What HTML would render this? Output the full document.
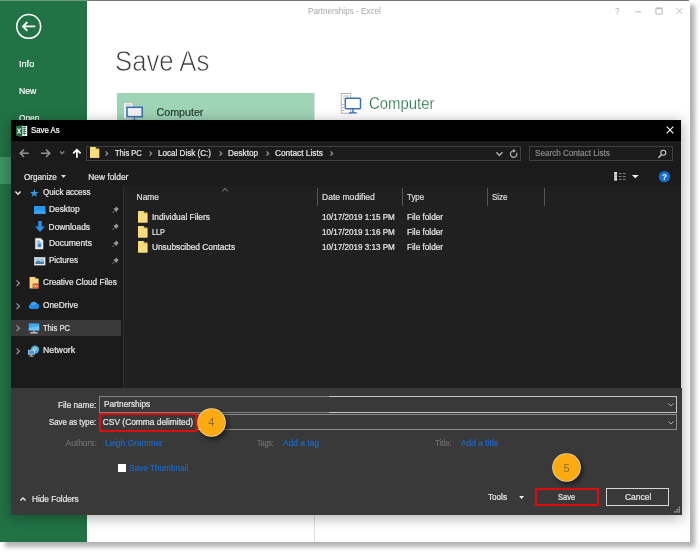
<!DOCTYPE html>
<html><head><meta charset="utf-8"><title>Save As</title>
<style>
html,body{margin:0;padding:0;}
body{width:700px;height:553px;background:#fff;overflow:hidden;position:relative;font-family:"Liberation Sans",sans-serif;}
#shot{position:absolute;left:0;top:0;width:689.5px;height:542.2px;background:#fff;box-shadow:4.5px 4.5px 4.5px rgba(0,0,0,.3);overflow:hidden;}
.t{position:absolute;white-space:nowrap;display:block;}
.a{position:absolute;display:block;}
#lay{position:absolute;left:0;top:0;width:700px;height:553px;will-change:transform;}
#side{left:0;top:0;width:87.4px;height:543px;background:#217346;}
#sel{left:0;top:157.3px;width:87.4px;height:27.1px;background:#3f9666;}
#dlg{left:10.6px;top:119.8px;width:670.9px;height:394.7px;background:#1b1b1b;box-shadow:0 3px 13px 1px rgba(0,0,0,.32);}
svg{position:absolute;overflow:visible;}
</style></head>
<body>
<div id="shot"><div id="lay">
<div class="a" id="side"></div><div class="a" id="sel"></div>
<div class="a" style="left:0;top:0;width:87.4px;height:.9px;background:#6f9b80"></div>
<div class="a" style="left:87.4px;top:0;width:602.1px;height:.9px;background:#767676"></div>
<svg style="left:14px;top:12px" width="30" height="30" viewBox="14 12 30 30"><circle cx="28.7" cy="26.4" r="11.9" fill="none" stroke="#fff" stroke-width="1.6"/><path d="M35.3 26.4H23.6M27.4 22L23 26.4L27.4 30.8" fill="none" stroke="#fff" stroke-width="1.9"/></svg>
<span class="t " style="left:18.60px;top:56.20px;font-size:9.80px;line-height:16px;height:16px;color:#fff;transform-origin:0 50%;transform:scaleX(0.930);-webkit-text-stroke:.2px;">Info</span>
<span class="t " style="left:18.60px;top:83.30px;font-size:9.80px;line-height:16px;height:16px;color:#fff;transform-origin:0 50%;transform:scaleX(0.888);-webkit-text-stroke:.2px;">New</span>
<span class="t " style="left:18.60px;top:110.20px;font-size:9.80px;line-height:16px;height:16px;color:#fff;transform-origin:0 50%;transform:scaleX(0.851);-webkit-text-stroke:.2px;">Open</span>
<span class="t " style="left:307.50px;top:4.40px;font-size:8.70px;line-height:14px;height:14px;color:#a6a6a6;transform-origin:0 50%;transform:scaleX(0.938);">Partnerships - Excel</span>
<svg style="left:610px;top:4px" width="80" height="16" viewBox="610 4 80 16"><g fill="none" stroke="#bcbcbc" stroke-width="1"><path d="M635.2 11.8H641.4"/><path d="M655.9 8.2H662.2V14H655.9Z"/><path d="M655.9 8.4H662.2" stroke-width="1.6"/><path d="M676.2 8L682.4 14.1M682.4 8L676.2 14.1"/></g></svg>
<span class="t " style="left:615.20px;top:4.10px;font-size:8.80px;line-height:14px;height:14px;color:#adadad;transform-origin:0 50%;transform:scaleX(0.899);">?</span>
<span class="t" style="left:115px;top:41.44px;font-size:29.6px;line-height:40px;color:#3a3a3a;-webkit-text-stroke:.75px #fff;transform-origin:0 0;transform:scaleX(0.868)">Save As</span>
<div class="a" style="left:117.1px;top:93.1px;width:197.1px;height:42px;background:#9fd5b7"></div>
<div class="a" style="left:313.8px;top:93px;width:1px;height:450px;background:#e1e1e1"></div>
<svg style="left:120px;top:100px" width="26" height="22" viewBox="120 100 26 22"><rect x="123.5" y="102.7" width="9.4" height="16" fill="#f6f8f7" stroke="#b4b8b6" stroke-width=".8"/><path d="M125 105H131.4M125 107.5H131.4" stroke="#a8a8a8" stroke-width=".7"/><rect x="127" y="107.3" width="15.2" height="9.4" fill="#f2f3f5" stroke="#3f72b2" stroke-width="1.6"/><path d="M134.6 117.4V120M131 120.3H138.2" stroke="#3f72b2" stroke-width="1.2"/></svg>
<span class="t " style="left:156.60px;top:103.50px;font-size:10.66px;line-height:17px;height:17px;color:#263c30;-webkit-text-stroke:.2px;">Computer</span>
<svg style="left:338px;top:90px" width="28" height="28" viewBox="338 90 28 28"><rect x="341.2" y="93.6" width="9.6" height="19.6" fill="#fff" stroke="#a4a4a4" stroke-width=".8"/><path d="M343 96H349M343 98.3H349" stroke="#a0a0a0" stroke-width=".7"/><path d="M342.4 104.5H343.8M342.4 107.5H343.8M342.4 110.5H343.8" stroke="#8a8a8a" stroke-width=".8"/><rect x="345.3" y="98.3" width="15.2" height="10.4" rx="1" fill="#fff" stroke="#3a74b8" stroke-width="1.5"/><path d="M353 109V112.4M349.2 112.8H356.8" stroke="#2e6db4" stroke-width="1.3"/></svg>
<span class="t " style="left:368.80px;top:90.70px;font-size:15.60px;line-height:25px;height:25px;color:#1d7044;transform-origin:0 50%;transform:scaleX(0.956);-webkit-text-stroke:.25px #fff;">Computer</span>
<div class="a" id="dlg">
<div class="a" style="left:-10.6px;top:-119.8px;width:700px;height:553px;">
<div class="a" style="left:10.6px;top:119.8px;width:670.9px;height:21.4px;background:#000"></div>
<div class="a" style="left:122.6px;top:186px;width:558.9px;height:202px;background:#202020;border-left:1px solid #2e2e2e;box-sizing:border-box"></div>
<div class="a" style="left:10.5px;top:388px;width:671px;height:126.5px;background:#393939"></div>
<svg style="left:16px;top:124.5px" width="12" height="12" viewBox="0 0 12 12"><rect x="4.6" y="1" width="6.6" height="10" fill="#fff"/><path d="M6.6 2.4H10.2M6.6 4.4H10.2M6.6 6.4H10.2M6.6 8.4H10.2" stroke="#217346" stroke-width="1"/><path d="M8.3 1.5V10.5" stroke="#217346" stroke-width=".7"/><path d="M0 1.2L6.3 0V12L0 10.8Z" fill="#1e6e42"/><path d="M1.6 3.5L4.6 8.5M4.6 3.5L1.6 8.5" stroke="#fff" stroke-width="1.1"/></svg>
<span class="t " style="left:31.20px;top:124.10px;font-size:8.40px;line-height:13px;height:13px;color:#fff;transform-origin:0 50%;transform:scaleX(0.928);-webkit-text-stroke:.22px;">Save As</span>
<svg style="left:666px;top:126px" width="8" height="8" viewBox="0 0 8 8"><path d="M.7 .7L7.3 7.3M7.3 .7L.7 7.3" stroke="#fff" stroke-width="1.1"/></svg>
<svg style="left:15px;top:145px" width="70" height="16" viewBox="15 145 70 16"><g fill="none"><path d="M28.8 153.3H20.4M24 149.6L20.2 153.3L24 157" stroke="#959595" stroke-width="1.5"/><path d="M41 153.3H49.6M46 149.6L49.8 153.3L46 157" stroke="#959595" stroke-width="1.5"/><path d="M59.9 151.4L62.1 153.6L64.3 151.4" stroke="#777" stroke-width="1.5"/><path d="M76.9 157.8V150M73.2 153.4L76.9 149.7L80.6 153.4" stroke="#fff" stroke-width="1.8"/></g></svg>
<div class="a" style="left:86.2px;top:145.7px;width:434.6px;height:14.9px;border:.9px solid #404040;box-sizing:border-box"></div>
<svg style="left:89.8px;top:147.3px" width="9.2" height="10.8" viewBox="0 0 9 10.4" preserveAspectRatio="none"><path d="M0 0H5.4V1.4H9V10.4H0Z" fill="#e9c85f"/><path d="M0 0H5.6V2.2H9V10.4H0Z" fill="#f7db7d"/><path d="M5.6 0V2.2H9" fill="none" stroke="#d9b64c" stroke-width=".5"/></svg>
<svg style="left:105px;top:151.10000000000002px" width="3.4" height="5" viewBox="0 0 3.4 5"><path d="M.5 .4L2.7 2.5L.5 4.6" fill="none" stroke="#9a9a9a" stroke-width="1.2"/></svg>
<span class="t " style="left:114.80px;top:146.80px;font-size:8.40px;line-height:13px;height:13px;color:#e6e6e6;transform-origin:0 50%;transform:scaleX(0.900);-webkit-text-stroke:.22px;">This PC</span>
<svg style="left:149.4px;top:151.10000000000002px" width="3.4" height="5" viewBox="0 0 3.4 5"><path d="M.5 .4L2.7 2.5L.5 4.6" fill="none" stroke="#9a9a9a" stroke-width="1.2"/></svg>
<span class="t " style="left:158.20px;top:146.80px;font-size:8.40px;line-height:13px;height:13px;color:#e6e6e6;transform-origin:0 50%;transform:scaleX(0.966);-webkit-text-stroke:.22px;">Local Disk (C:)</span>
<svg style="left:218.8px;top:151.10000000000002px" width="3.4" height="5" viewBox="0 0 3.4 5"><path d="M.5 .4L2.7 2.5L.5 4.6" fill="none" stroke="#9a9a9a" stroke-width="1.2"/></svg>
<span class="t " style="left:228.10px;top:146.80px;font-size:8.40px;line-height:13px;height:13px;color:#e6e6e6;transform-origin:0 50%;transform:scaleX(0.977);-webkit-text-stroke:.22px;">Desktop</span>
<svg style="left:266.3px;top:151.10000000000002px" width="3.4" height="5" viewBox="0 0 3.4 5"><path d="M.5 .4L2.7 2.5L.5 4.6" fill="none" stroke="#9a9a9a" stroke-width="1.2"/></svg>
<span class="t " style="left:275.00px;top:146.80px;font-size:8.40px;line-height:13px;height:13px;color:#e6e6e6;transform-origin:0 50%;transform:scaleX(0.989);-webkit-text-stroke:.22px;">Contact Lists</span>
<svg style="left:330.2px;top:151.10000000000002px" width="3.4" height="5" viewBox="0 0 3.4 5"><path d="M.5 .4L2.7 2.5L.5 4.6" fill="none" stroke="#9a9a9a" stroke-width="1.2"/></svg>
<svg style="left:495px;top:148px" width="24" height="11" viewBox="495 148 24 11"><g fill="none" stroke="#a6a6a6"><path d="M496.3 152.3L499.4 155.4L502.5 152.3" stroke-width="1.5"/><path d="M516.6 152.7A3.25 3.25 0 1 1 513.4 150.8" stroke-width="1.3"/></g><path d="M513 148.8L516 150.9L513 152.8Z" fill="#a6a6a6"/></svg>
<div class="a" style="left:528.9px;top:145.7px;width:144px;height:15px;border:.9px solid #404040;box-sizing:border-box"></div>
<span class="t " style="left:535.40px;top:146.70px;font-size:8.40px;line-height:13px;height:13px;color:#8a8a8a;transform-origin:0 50%;transform:scaleX(0.969);-webkit-text-stroke:.22px;">Search Contact Lists</span>
<svg style="left:657px;top:149px" width="10" height="10" viewBox="657 149 10 10"><circle cx="663.3" cy="152.8" r="2.5" fill="none" stroke="#cfcfcf" stroke-width="1.1"/><path d="M661.5 154.7L658.4 157.7" stroke="#cfcfcf" stroke-width="1.3"/></svg>
<span class="t " style="left:23.70px;top:170.50px;font-size:8.40px;line-height:13px;height:13px;color:#e6e6e6;transform-origin:0 50%;transform:scaleX(0.965);-webkit-text-stroke:.22px;">Organize</span>
<svg style="left:61.4px;top:175.2px" width="5" height="3" viewBox="0 0 5 3"><path d="M0 0H5L2.5 3Z" fill="#ddd"/></svg>
<span class="t " style="left:88.30px;top:170.50px;font-size:8.40px;line-height:13px;height:13px;color:#e6e6e6;-webkit-text-stroke:.22px;">New folder</span>
<svg style="left:613px;top:171px" width="28" height="11" viewBox="613 171 28 11"><rect x="614.2" y="172" width="2.8" height="8.6" fill="#e8e8e8"/><g stroke="#8c8c8c" stroke-width=".9" stroke-dasharray="2.8 1.3"><path d="M618.8 173.6H626M618.8 176.5H626M618.8 179.4H626"/></g><path d="M614.2 174.9H617M614.2 177.8H617" stroke="#555" stroke-width=".5"/><path d="M631.8 175H638.8L635.3 178.3Z" fill="#eee"/></svg>
<svg style="left:658px;top:170px" width="13" height="13" viewBox="658 170 13 13"><circle cx="664.4" cy="176.6" r="5.7" fill="#156cd0"/></svg>
<span class="t " style="left:661.90px;top:169.90px;font-size:8.60px;line-height:14px;height:14px;color:#fff;font-weight:bold;transform-origin:0 50%;transform:scaleX(0.952);">?</span>
<svg style="left:15.1px;top:190.8px" width="6" height="4" viewBox="0 0 6 4"><path d="M.4 .4L3 3.2L5.6 .4" fill="none" stroke="#e4e4e4" stroke-width="1.45"/></svg>
<svg style="left:30.1px;top:189.3px" width="8.6" height="8.2" viewBox="0 0 24 23"><path d="M12 0L15 8.5H24L16.8 13.8L19.5 22.5L12 17.2L4.5 22.5L7.2 13.8L0 8.5H9Z" fill="#2f9bef"/></svg>
<span class="t " style="left:42.90px;top:186.20px;font-size:8.40px;line-height:13px;height:13px;color:#e6e6e6;transform-origin:0 50%;transform:scaleX(0.955);-webkit-text-stroke:.22px;">Quick access</span>
<svg style="left:33.5px;top:206.3px" width="11.5" height="8" viewBox="0 0 11.5 8"><rect x="0" y="0" width="11.5" height="7.8" fill="#2496f0"/><path d="M0 5.6L5 4.2L11.5 6V7.8H0Z" fill="#3aa6f6"/></svg>
<span class="t " style="left:48.60px;top:203.40px;font-size:8.40px;line-height:13px;height:13px;color:#e6e6e6;transform-origin:0 50%;transform:scaleX(0.993);-webkit-text-stroke:.22px;">Desktop</span>
<svg style="left:112px;top:206.3px" width="7.4" height="7.4" viewBox="0 0 10 10"><path d="M5.6 .6L9.4 4.4L8.2 4.8L6.6 6.6L6.4 8.6L1.6 3.6L3.6 3.4L5.2 1.8Z" fill="#9a9a9a"/><path d="M3.6 6.4L.6 9.4" stroke="#9a9a9a" stroke-width="1.1"/></svg>
<svg style="left:34.6px;top:221px" width="10" height="11.6" viewBox="0 0 10 11.6"><path d="M3.2 0H6.8V5.4H10L5 11L0 5.4H3.2Z" fill="#2c8fe6"/></svg>
<span class="t " style="left:48.60px;top:220.50px;font-size:8.40px;line-height:13px;height:13px;color:#e6e6e6;-webkit-text-stroke:.22px;">Downloads</span>
<svg style="left:112px;top:223.4px" width="7.4" height="7.4" viewBox="0 0 10 10"><path d="M5.6 .6L9.4 4.4L8.2 4.8L6.6 6.6L6.4 8.6L1.6 3.6L3.6 3.4L5.2 1.8Z" fill="#9a9a9a"/><path d="M3.6 6.4L.6 9.4" stroke="#9a9a9a" stroke-width="1.1"/></svg>
<svg style="left:35.4px;top:238px" width="8.4" height="11.4" viewBox="0 0 8.4 11.4"><path d="M.3 .3H5.8L8.1 2.6V11.1H.3Z" fill="#f6f6f6" stroke="#b8b8b8" stroke-width=".5"/><path d="M1.8 3.2H5M1.8 5H6.6M1.8 6.8H6.6M1.8 8.6H6.6" stroke="#3a8fd8" stroke-width=".9"/><rect x="3.4" y="5.6" width="2.4" height="3.6" fill="#2f86d4"/></svg>
<span class="t " style="left:48.60px;top:237.40px;font-size:8.40px;line-height:13px;height:13px;color:#e6e6e6;transform-origin:0 50%;transform:scaleX(1.012);-webkit-text-stroke:.22px;">Documents</span>
<svg style="left:112px;top:240.3px" width="7.4" height="7.4" viewBox="0 0 10 10"><path d="M5.6 .6L9.4 4.4L8.2 4.8L6.6 6.6L6.4 8.6L1.6 3.6L3.6 3.4L5.2 1.8Z" fill="#9a9a9a"/><path d="M3.6 6.4L.6 9.4" stroke="#9a9a9a" stroke-width="1.1"/></svg>
<svg style="left:33.7px;top:257px" width="11.4" height="8.4" viewBox="0 0 11.4 8.4"><rect x=".3" y=".3" width="10.8" height="7.8" fill="#eef2f4" stroke="#d0d0d0" stroke-width=".5"/><rect x="1.5" y="1.4" width="8.4" height="5.6" fill="#9cc8e6"/><path d="M1.5 7L1.5 5L4.4 3.8L7 5L9.9 4.2V7Z" fill="#4a7f9c"/></svg>
<span class="t " style="left:48.60px;top:254.40px;font-size:8.40px;line-height:13px;height:13px;color:#e6e6e6;transform-origin:0 50%;transform:scaleX(0.956);-webkit-text-stroke:.22px;">Pictures</span>
<svg style="left:112px;top:257.29999999999995px" width="7.4" height="7.4" viewBox="0 0 10 10"><path d="M5.6 .6L9.4 4.4L8.2 4.8L6.6 6.6L6.4 8.6L1.6 3.6L3.6 3.4L5.2 1.8Z" fill="#9a9a9a"/><path d="M3.6 6.4L.6 9.4" stroke="#9a9a9a" stroke-width="1.1"/></svg>
<svg style="left:16.3px;top:280.2px" width="4" height="6.4" viewBox="0 0 4 6.4"><path d="M.5 .4L3.4 3.2L.5 6" fill="none" stroke="#909090" stroke-width="1.3"/></svg>
<svg style="left:29px;top:276.6px" width="10" height="12" viewBox="0 0 10 12"><path d="M.6 0H6.4V1.4H9.6V11.6H.6Z" fill="#f6da80"/><rect x="3.6" y="6.6" width="6" height="5" rx="1.2" fill="#d93a1c"/><circle cx="5.6" cy="9.2" r="1.1" fill="none" stroke="#fff" stroke-width=".6"/><circle cx="7.4" cy="9.2" r="1.1" fill="none" stroke="#fff" stroke-width=".6"/></svg>
<span class="t " style="left:42.60px;top:276.30px;font-size:8.40px;line-height:13px;height:13px;color:#e6e6e6;transform-origin:0 50%;transform:scaleX(0.978);-webkit-text-stroke:.22px;">Creative Cloud Files</span>
<svg style="left:16.3px;top:303.0px" width="4" height="6.4" viewBox="0 0 4 6.4"><path d="M.5 .4L3.4 3.2L.5 6" fill="none" stroke="#909090" stroke-width="1.3"/></svg>
<svg style="left:28px;top:301.4px" width="12" height="8" viewBox="0 0 12 8"><path d="M2.6 8A2.5 2.5 0 0 1 2.4 3.2A3.6 3.6 0 0 1 9 2.6A2.8 2.8 0 0 1 9.4 8Z" fill="#1f8be6"/><path d="M2.4 3.2A3.6 3.6 0 0 1 9 2.6L4.5 5Z" fill="#3aa4f4"/></svg>
<span class="t " style="left:42.60px;top:299.10px;font-size:8.40px;line-height:13px;height:13px;color:#e6e6e6;transform-origin:0 50%;transform:scaleX(0.992);-webkit-text-stroke:.22px;">OneDrive</span>
<div class="a" style="left:10.5px;top:320.4px;width:110.2px;height:15.4px;background:#393939"></div>
<svg style="left:16.3px;top:325.4px" width="4" height="6.4" viewBox="0 0 4 6.4"><path d="M.5 .4L3.4 3.2L.5 6" fill="none" stroke="#909090" stroke-width="1.3"/></svg>
<svg style="left:27.8px;top:322.6px" width="12" height="11" viewBox="0 0 12 11"><rect x=".8" y=".4" width="10.4" height="7" fill="#3fa8f2"/><path d="M.8 5L11.2 3V7.4H.8Z" fill="#6cc2f8"/><path d="M6 7.4V9.4M2.2 9.9H9.8" stroke="#d8d8d8" stroke-width="1.1"/></svg>
<span class="t " style="left:42.60px;top:321.50px;font-size:8.40px;line-height:13px;height:13px;color:#e6e6e6;transform-origin:0 50%;transform:scaleX(0.904);-webkit-text-stroke:.22px;">This PC</span>
<svg style="left:16.3px;top:348.2px" width="4" height="6.4" viewBox="0 0 4 6.4"><path d="M.5 .4L3.4 3.2L.5 6" fill="none" stroke="#909090" stroke-width="1.3"/></svg>
<svg style="left:27.6px;top:345px" width="12" height="12" viewBox="0 0 12 12"><circle cx="7" cy="4.6" r="4.2" fill="#4aa6ea"/><path d="M4.4 3.2Q7 1 9.6 3.4Q8 6 5.4 7.2Z" fill="#8fd0a8"/><rect x=".4" y="5.2" width="6.2" height="4.2" fill="#3d9be8" stroke="#d8ecfa" stroke-width=".6"/><path d="M3.5 9.4V10.8M1.4 11.2H5.6" stroke="#d0d0d0" stroke-width=".9"/></svg>
<span class="t " style="left:42.60px;top:344.30px;font-size:8.40px;line-height:13px;height:13px;color:#e6e6e6;transform-origin:0 50%;transform:scaleX(1.045);-webkit-text-stroke:.22px;">Network</span>
<div class="a" style="left:317.2px;top:188px;width:1px;height:18px;background:#565656"></div>
<div class="a" style="left:402.4px;top:188px;width:1px;height:18px;background:#565656"></div>
<div class="a" style="left:487.4px;top:188px;width:1px;height:18px;background:#565656"></div>
<div class="a" style="left:544px;top:188px;width:1px;height:18px;background:#565656"></div>
<svg style="left:222px;top:188px" width="6" height="3.4" viewBox="0 0 6 3.4"><path d="M.4 3L3 .5L5.6 3" fill="none" stroke="#a8a8a8" stroke-width=".9"/></svg>
<span class="t " style="left:136.60px;top:190.70px;font-size:8.40px;line-height:13px;height:13px;color:#dedede;-webkit-text-stroke:.22px;">Name</span>
<span class="t " style="left:322.00px;top:190.70px;font-size:8.40px;line-height:13px;height:13px;color:#dedede;transform-origin:0 50%;transform:scaleX(1.023);-webkit-text-stroke:.22px;">Date modified</span>
<span class="t " style="left:407.20px;top:190.70px;font-size:8.40px;line-height:13px;height:13px;color:#dedede;transform-origin:0 50%;transform:scaleX(0.944);-webkit-text-stroke:.22px;">Type</span>
<span class="t " style="left:492.00px;top:190.70px;font-size:8.40px;line-height:13px;height:13px;color:#dedede;transform-origin:0 50%;transform:scaleX(0.955);-webkit-text-stroke:.22px;">Size</span>
<svg style="left:138.3px;top:211.4px" width="9.4" height="11.5" viewBox="0 0 9 10.4" preserveAspectRatio="none"><path d="M0 0H5.4V1.4H9V10.4H0Z" fill="#e9c85f"/><path d="M0 0H5.6V2.2H9V10.4H0Z" fill="#f7db7d"/><path d="M5.6 0V2.2H9" fill="none" stroke="#d9b64c" stroke-width=".5"/></svg>
<span class="t " style="left:151.60px;top:211.30px;font-size:8.40px;line-height:13px;height:13px;color:#e6e6e6;transform-origin:0 50%;transform:scaleX(0.996);-webkit-text-stroke:.22px;">Individual Filers</span>
<span class="t " style="left:322.00px;top:211.30px;font-size:8.40px;line-height:13px;height:13px;color:#e6e6e6;transform-origin:0 50%;transform:scaleX(0.965);-webkit-text-stroke:.22px;">10/17/2019 1:15 PM</span>
<span class="t " style="left:407.40px;top:211.30px;font-size:8.40px;line-height:13px;height:13px;color:#e6e6e6;transform-origin:0 50%;transform:scaleX(0.981);-webkit-text-stroke:.22px;">File folder</span>
<svg style="left:138.3px;top:226px" width="9.4" height="11.5" viewBox="0 0 9 10.4" preserveAspectRatio="none"><path d="M0 0H5.4V1.4H9V10.4H0Z" fill="#e9c85f"/><path d="M0 0H5.6V2.2H9V10.4H0Z" fill="#f7db7d"/><path d="M5.6 0V2.2H9" fill="none" stroke="#d9b64c" stroke-width=".5"/></svg>
<span class="t " style="left:151.60px;top:225.80px;font-size:8.40px;line-height:13px;height:13px;color:#e6e6e6;transform-origin:0 50%;transform:scaleX(0.870);-webkit-text-stroke:.22px;">LLP</span>
<span class="t " style="left:322.00px;top:225.80px;font-size:8.40px;line-height:13px;height:13px;color:#e6e6e6;transform-origin:0 50%;transform:scaleX(0.965);-webkit-text-stroke:.22px;">10/17/2019 1:16 PM</span>
<span class="t " style="left:407.40px;top:225.80px;font-size:8.40px;line-height:13px;height:13px;color:#e6e6e6;transform-origin:0 50%;transform:scaleX(0.981);-webkit-text-stroke:.22px;">File folder</span>
<svg style="left:138.3px;top:240.7px" width="9.4" height="11.5" viewBox="0 0 9 10.4" preserveAspectRatio="none"><path d="M0 0H5.4V1.4H9V10.4H0Z" fill="#e9c85f"/><path d="M0 0H5.6V2.2H9V10.4H0Z" fill="#f7db7d"/><path d="M5.6 0V2.2H9" fill="none" stroke="#d9b64c" stroke-width=".5"/></svg>
<span class="t " style="left:151.60px;top:241.30px;font-size:8.40px;line-height:13px;height:13px;color:#e6e6e6;transform-origin:0 50%;transform:scaleX(0.991);-webkit-text-stroke:.22px;">Unsubscibed Contacts</span>
<span class="t " style="left:322.00px;top:241.30px;font-size:8.40px;line-height:13px;height:13px;color:#e6e6e6;transform-origin:0 50%;transform:scaleX(0.965);-webkit-text-stroke:.22px;">10/17/2019 3:13 PM</span>
<span class="t " style="left:407.40px;top:241.30px;font-size:8.40px;line-height:13px;height:13px;color:#e6e6e6;transform-origin:0 50%;transform:scaleX(0.981);-webkit-text-stroke:.22px;">File folder</span>
<div class="a" style="left:99.2px;top:396.2px;width:577.4px;height:16.6px;border:1px solid #808080;box-sizing:border-box;background:#393939"></div>
<div class="a" style="left:329.4px;top:396.2px;width:347.2px;height:16.6px;border:1px solid #c6c6c6;border-left:0;box-sizing:border-box"></div>
<div class="a" style="left:99.2px;top:414.2px;width:577.4px;height:16.2px;border:1px solid #8c8c8c;box-sizing:border-box;background:#393939"></div>
<div class="a" style="left:98.8px;top:413.4px;width:97.8px;height:18.2px;border:2px solid #e30a0a;background:#393939;box-sizing:border-box"></div>
<span class="t " style="left:57.60px;top:398.50px;font-size:8.40px;line-height:13px;height:13px;color:#e6e6e6;transform-origin:0 50%;transform:scaleX(0.977);-webkit-text-stroke:.22px;">File name:</span>
<span class="t " style="left:48.60px;top:416.30px;font-size:8.40px;line-height:13px;height:13px;color:#e6e6e6;transform-origin:0 50%;transform:scaleX(0.929);-webkit-text-stroke:.22px;">Save as type:</span>
<span class="t " style="left:103.60px;top:397.90px;font-size:8.40px;line-height:13px;height:13px;color:#e6e6e6;transform-origin:0 50%;transform:scaleX(0.982);-webkit-text-stroke:.22px;">Partnerships</span>
<span class="t " style="left:102.80px;top:416.30px;font-size:8.40px;line-height:13px;height:13px;color:#e6e6e6;-webkit-text-stroke:.22px;">CSV (Comma delimited)</span>
<svg style="left:667.6px;top:402.79999999999995px" width="6" height="3.6" viewBox="0 0 6 3.6"><path d="M.4 .4L3 3L5.6 .4" fill="none" stroke="#c8c8c8" stroke-width=".8"/></svg>
<svg style="left:667.6px;top:420.79999999999995px" width="6" height="3.6" viewBox="0 0 6 3.6"><path d="M.4 .4L3 3L5.6 .4" fill="none" stroke="#c8c8c8" stroke-width=".8"/></svg>
<div class="a" style="left:197.8px;top:408.9px;width:27px;height:27px;border-radius:50%;background:#fbaa12;box-shadow:0 0 0 .8px #f1dfae, 2.5px 3px 4px 1px rgba(0,0,0,.42);"></div>
<span class="t " style="left:208.20px;top:413.20px;font-size:11.00px;line-height:18px;height:18px;color:#8c6c30;">4</span>
<span class="t " style="left:65.60px;top:436.60px;font-size:8.40px;line-height:13px;height:13px;color:#6e6e6e;-webkit-text-stroke:.22px;">Authors:</span>
<span class="t " style="left:105.00px;top:436.60px;font-size:8.40px;line-height:13px;height:13px;color:#1b68c8;transform-origin:0 50%;transform:scaleX(0.994);-webkit-text-stroke:.22px;">Leigh Grammer</span>
<span class="t " style="left:257.00px;top:436.60px;font-size:8.40px;line-height:13px;height:13px;color:#6e6e6e;transform-origin:0 50%;transform:scaleX(0.837);-webkit-text-stroke:.22px;">Tags:</span>
<span class="t " style="left:282.60px;top:436.60px;font-size:8.40px;line-height:13px;height:13px;color:#1b68c8;transform-origin:0 50%;transform:scaleX(1.007);-webkit-text-stroke:.22px;">Add a tag</span>
<span class="t " style="left:435.00px;top:436.60px;font-size:8.40px;line-height:13px;height:13px;color:#6e6e6e;transform-origin:0 50%;transform:scaleX(0.939);-webkit-text-stroke:.22px;">Title:</span>
<span class="t " style="left:460.60px;top:436.60px;font-size:8.40px;line-height:13px;height:13px;color:#1b68c8;transform-origin:0 50%;transform:scaleX(1.006);-webkit-text-stroke:.22px;">Add a title</span>
<div class="a" style="left:118px;top:464.2px;width:7.8px;height:8.2px;background:#fff"></div>
<span class="t " style="left:128.80px;top:461.90px;font-size:8.40px;line-height:13px;height:13px;color:#1b68c8;transform-origin:0 50%;transform:scaleX(0.984);-webkit-text-stroke:.22px;">Save Thumbnail</span>
<svg style="left:20px;top:496.6px" width="6" height="4" viewBox="0 0 6 4"><path d="M.4 3.6L3 .9L5.6 3.6" fill="none" stroke="#e6e6e6" stroke-width="1.4"/></svg>
<span class="t " style="left:32.00px;top:492.90px;font-size:8.40px;line-height:13px;height:13px;color:#e6e6e6;transform-origin:0 50%;transform:scaleX(0.983);-webkit-text-stroke:.22px;">Hide Folders</span>
<span class="t " style="left:488.00px;top:490.50px;font-size:8.40px;line-height:13px;height:13px;color:#e6e6e6;transform-origin:0 50%;transform:scaleX(0.969);-webkit-text-stroke:.22px;">Tools</span>
<svg style="left:519.2px;top:495.6px" width="5.2" height="3" viewBox="0 0 5 3"><path d="M0 0H5L2.5 3Z" fill="#eee"/></svg>
<div class="a" style="left:535.4px;top:487.6px;width:63.2px;height:18.2px;border:2px solid #e30a0a;box-sizing:border-box"></div>
<span class="t " style="left:558.20px;top:491.10px;font-size:8.40px;line-height:13px;height:13px;color:#e6e6e6;transform-origin:0 50%;transform:scaleX(0.898);-webkit-text-stroke:.22px;">Save</span>
<div class="a" style="left:606.2px;top:487.8px;width:62.8px;height:17.8px;border:1.5px solid #d6d6d6;box-sizing:border-box"></div>
<span class="t " style="left:624.60px;top:491.10px;font-size:8.40px;line-height:13px;height:13px;color:#e6e6e6;transform-origin:0 50%;transform:scaleX(1.010);-webkit-text-stroke:.22px;">Cancel</span>
<div class="a" style="left:553.0px;top:454.4px;width:27px;height:27px;border-radius:50%;background:#fbaa12;box-shadow:0 0 0 .8px #f1dfae, 2.5px 3px 4px 1px rgba(0,0,0,.42);"></div>
<span class="t " style="left:563.40px;top:458.70px;font-size:11.00px;line-height:18px;height:18px;color:#8c6c30;">5</span>
<svg style="left:673px;top:506px" width="8" height="8" viewBox="0 0 8 8"><g fill="#b4b4b4"><rect x="5.6" y=".8" width="1.4" height="1.4"/><rect x="3.4" y="3" width="1.4" height="1.4"/><rect x="5.6" y="3" width="1.4" height="1.4"/><rect x="1.2" y="5.2" width="1.4" height="1.4"/><rect x="3.4" y="5.2" width="1.4" height="1.4"/><rect x="5.6" y="5.2" width="1.4" height="1.4"/></g></svg>
</div></div>
</div></div>
</body></html>
